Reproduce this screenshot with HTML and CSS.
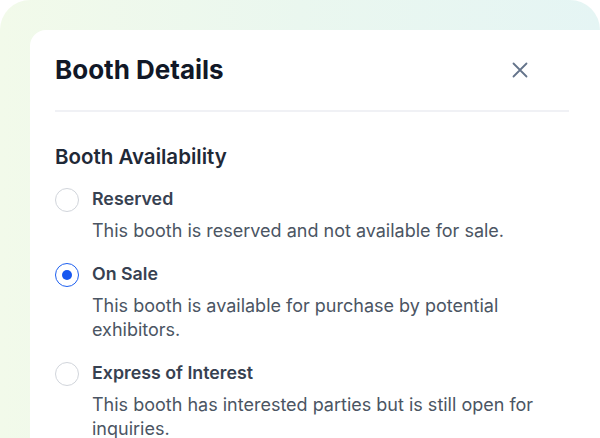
FILE: index.html
```html
<!DOCTYPE html>
<html lang="en">
<head>
<meta charset="utf-8">
<title>Booth Details</title>
<link rel="stylesheet" href="styles.css">
</head>
<body>
<div class="frame">
  <div class="card">
    <header class="card-header">
      <h1 class="title">Booth Details</h1>
      <button class="close" aria-label="Close">
        <svg width="16" height="16" viewBox="0 0 16 16" fill="none" stroke="#64748b" stroke-width="1.8" stroke-linecap="round"><path d="M1.5 1.5 L14.5 14.5 M14.5 1.5 L1.5 14.5"/></svg>
      </button>
    </header>
    <section class="body">
      <h2 class="section-title">Booth Availability</h2>
      <div class="options">
        <label class="option">
          <span class="radio"></span>
          <span class="text">
            <span class="label">Reserved</span>
            <span class="desc">This booth is reserved and not available for sale.</span>
          </span>
        </label>
        <label class="option">
          <span class="radio checked"></span>
          <span class="text">
            <span class="label">On Sale</span>
            <span class="desc">This booth is available for purchase by potential exhibitors.</span>
          </span>
        </label>
        <label class="option">
          <span class="radio"></span>
          <span class="text">
            <span class="label">Express of Interest</span>
            <span class="desc">This booth has interested parties but is still open for inquiries.</span>
          </span>
        </label>
      </div>
    </section>
  </div>
</div>
</body>
</html>
```

FILE: styles.css
```css
* { box-sizing: border-box; }
html, body { margin: 0; padding: 0; background: #ffffff; }
body {
  width: 600px;
  height: 438px;
  overflow: hidden;
  font-family: Inter, "Noto Sans", sans-serif;
}
.frame {
  width: 600px;
  height: 438px;
  border-radius: 30px 30px 0 0;
  background: linear-gradient(90deg, #f2faea 0%, #eaf7ef 50%, #e5f5f4 100%);
  padding: 30px 0 0 30px;
  overflow: hidden;
}
.card {
  width: 570px;
  height: 440px;
  background: #ffffff;
  border-radius: 16px 0 0 0;
  padding: 24px 31px 0 25px;
}
.card-header {
  display: flex;
  align-items: center;
  justify-content: space-between;
  height: 32px;
  margin: 0 0 24px 0;
}
.title {
  margin: 0;
  font-size: 26px;
  line-height: 32px;
  font-weight: 700;
  color: #111827;
}
.close {
  border: 0;
  background: transparent;
  padding: 0;
  width: 16px;
  height: 16px;
  margin-right: 41px;
  display: flex;
}
.body {
  border-top: 2px solid #f0f1f5;
  padding-top: 31px;
}
.section-title {
  margin: 0 0 16px 0;
  font-size: 20.5px;
  line-height: 28px;
  font-weight: 600;
  color: #1f2937;
}
.options {
  display: flex;
  flex-direction: column;
  gap: 19px;
}
.option {
  display: flex;
  gap: 13px;
}
.radio {
  flex: none;
  width: 24px;
  height: 24px;
  margin-top: 1px;
  border-radius: 50%;
  border: 1px solid #d1d5db;
  background: #ffffff;
  display: flex;
  align-items: center;
  justify-content: center;
}
.radio.checked {
  border: 1.5px solid #1d5ff0;
}
.radio.checked::after {
  content: "";
  width: 10px;
  height: 10px;
  border-radius: 50%;
  background: #1757f0;
}
.text {
  display: flex;
  flex-direction: column;
  gap: 8px;
}
.label {
  font-size: 17.8px;
  line-height: 24px;
  font-weight: 600;
  color: #374151;
}
.desc {
  font-size: 18px;
  line-height: 24px;
  font-weight: 400;
  color: #4b5563;
}
```
